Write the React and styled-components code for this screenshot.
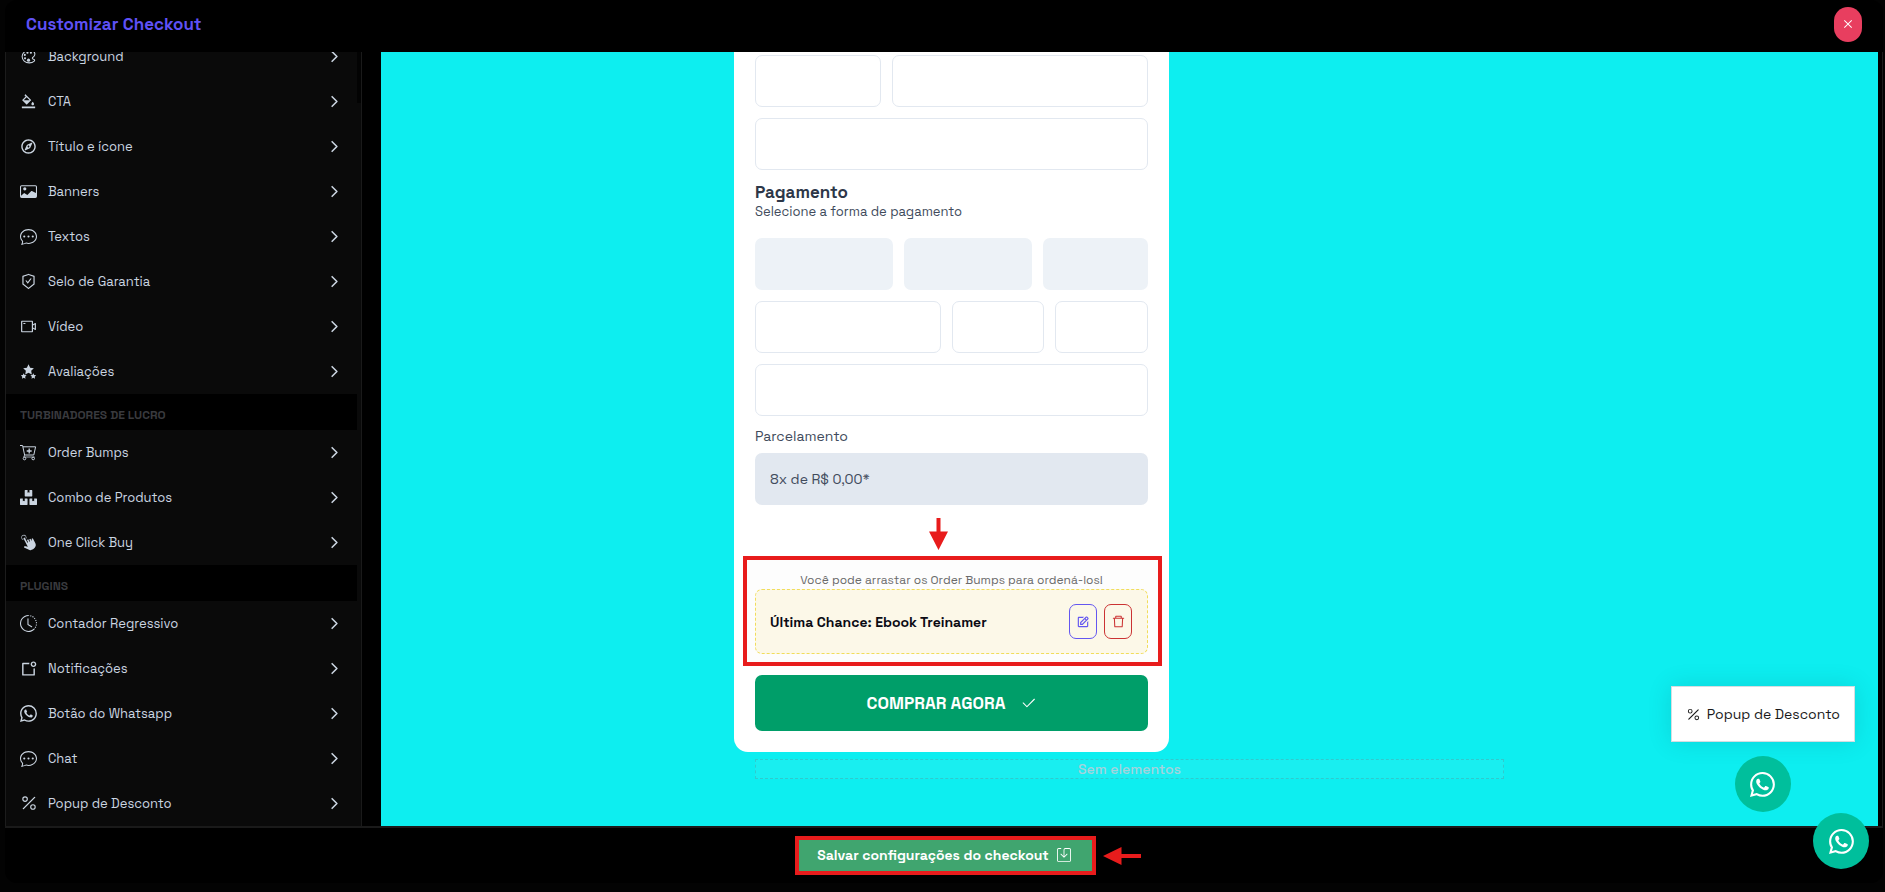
import React from 'react';
import styled, { createGlobalStyle } from 'styled-components';
import { AiOutlineBgColors, AiOutlineClose, AiOutlineDelete, AiOutlineSafetyCertificate, AiOutlineVideoCamera } from 'react-icons/ai';
import { BsCardImage, BsChatDots, BsCheck2, BsClockHistory, BsPercent, BsSave, BsWhatsapp } from 'react-icons/bs';
import { BiEdit } from 'react-icons/bi';
import { FaBoxes, FaRegCompass } from 'react-icons/fa';
import { GiClick, GiStarsStack } from 'react-icons/gi';
import { IoChevronForward, IoColorPaletteOutline } from 'react-icons/io5';
import { RiNotificationBadgeLine } from 'react-icons/ri';

const GlobalStyle = createGlobalStyle`
    *, *::before, *::after {
        box-sizing: border-box;
    }

    body {
        margin: 0;
        background-color: #030303;
        font-family: 'Space Grotesk', Inter, sans-serif;
        font-size: 14px;
    }

    button, input, select {
        font-family: inherit;
        margin: 0;
    }

    button {
        cursor: pointer;
    }
`;

const Modal = styled.div`
    display: flex;
    flex-direction: column;
    height: 100vh;
    padding: 0 2px 9px 5px;
`;

const Header = styled.header`
    display: flex;
    flex: none;
    align-items: center;
    justify-content: space-between;
    height: 52px;
    padding: 0 21px 4px;
    background-color: #000;
    border-radius: 12px 12px 0 0;
`;

const Title = styled.h1`
    margin: 0;
    font-size: 17px;
    font-weight: 600;
    color: #5f51f6;
`;

const CloseButton = styled.button`
    display: flex;
    align-items: center;
    justify-content: center;
    width: 28px;
    height: 35px;
    padding: 0;
    border: 0;
    border-radius: 14px;
    background-color: #e83e5f;
    color: #fff;
`;

const Body = styled.div`
    display: flex;
    flex: 1;
    min-height: 0;
    gap: 19px;
    padding-right: 4px;
    background-color: #000;
    border: 1px solid #1c1c1c;
    border-width: 0 1px;
`;

const Sidebar = styled.nav`
    position: relative;
    display: flex;
    flex: none;
    flex-direction: column;
    justify-content: flex-end;
    width: 356px;
    padding-right: 4px;
    overflow: hidden;
    background-color: #0a0a0a;
    border-right: 1px solid #1a1a1a;
`;

const ScrollThumb = styled.span`
    position: absolute;
    top: 0;
    right: 0;
    width: 4px;
    height: 51px;
    background-color: #030303;
`;

const SectionTitle = styled.h2`
    flex: none;
    height: 36px;
    margin: 0;
    padding: 7px 14px 0;
    background-color: #000;
    color: #393a3e;
    font-size: 12px;
    font-weight: 700;
    line-height: 28px;
    text-transform: uppercase;
`;

const MenuItem = styled.button`
    display: flex;
    flex: none;
    align-items: center;
    gap: 11px;
    width: 100%;
    height: 45px;
    padding: 0 14px 1px;
    border: 0;
    background: none;
    color: #cbd5e1;
    font-size: 13px;
    text-align: left;
`;

const MenuIcon = styled.span`
    display: flex;
    flex: none;
    align-items: center;
    justify-content: center;
    width: 17px;
    font-size: 17px;

    svg {
        flex: none;
    }
`;

const MenuLabel = styled.span`
    flex: 1;
`;

const Canvas = styled.main`
    position: relative;
    display: flex;
    flex: 1;
    flex-direction: column;
    align-items: center;
    justify-content: flex-end;
    min-width: 0;
    padding-bottom: 47px;
    overflow: hidden;
    background-color: #0deef0;
`;

const Preview = styled.div`
    display: flex;
    flex: none;
    flex-direction: column;
    gap: 7px;
    width: 100%;
    max-width: 791px;
`;

const Card = styled.form`
    display: flex;
    flex-direction: column;
    width: 55%;
    padding: 21px;
    background-color: #fff;
    border-radius: 14px;
    color: #414b5c;
`;

const FieldRow = styled.div`
    display: grid;
    grid-template-columns: ${props => props.$columns || '1fr'};
    gap: 11px;
    margin-bottom: 11px;
`;

const Field = styled.input`
    width: 100%;
    height: 52px;
    padding: 0 15px;
    border: 1px solid #e2e8f0;
    border-radius: 7px;
    background-color: #fff;
`;

const Method = styled.button`
    height: 52px;
    border: 0;
    border-radius: 7px;
    background-color: #edf2f7;
`;

const CardTitle = styled.h3`
    margin: 0;
    color: #2d3748;
    font-size: 17px;
    font-weight: 600;
    line-height: 22px;
`;

const CardText = styled.p`
    margin: 0 0 17px;
    font-size: 13px;
    line-height: 18px;
`;

const Label = styled.label`
    margin-bottom: 7px;
    font-size: 14px;
    line-height: 19px;
`;

const Installments = styled.select`
    width: 100%;
    height: 52px;
    padding: 0 15px;
    appearance: none;
    border: 0;
    border-radius: 7px;
    background-color: #e2e8f0;
    color: #414b5c;
    font-size: 14px;
`;

const BumpFrame = styled.section`
    position: relative;
    margin: 51px -14px 9px -12px;
    padding: 12px 10px 8px 8px;
    border: 4px solid #e81c1c;
    background-color: #fdfdfd;
`;

const BumpArrow = styled.svg`
    position: absolute;
    top: -42px;
    left: 182px;
`;

const BumpHint = styled.p`
    margin: 0;
    color: #6b6b6b;
    font-size: 12px;
    line-height: 17px;
    text-align: center;
`;

const Bump = styled.div`
    display: flex;
    align-items: center;
    gap: 7px;
    height: 65px;
    padding: 0 15px 0 14px;
    border: 1px dashed #f1dd5c;
    border-radius: 7px;
    background-color: #fcf8e8;
    color: #0b0b14;
`;

const BumpName = styled.strong`
    flex: 1;
    font-weight: 600;
`;

const BumpButton = styled.button`
    display: flex;
    align-items: center;
    justify-content: center;
    width: 28px;
    height: 35px;
    padding: 0;
    border: 1px solid ${props => props.$color};
    border-radius: 7px;
    background: none;
    color: ${props => props.$color};
    font-size: 14px;
`;

const BuyButton = styled.button`
    display: flex;
    align-items: center;
    justify-content: center;
    gap: 14px;
    width: 100%;
    height: 56px;
    border: 0;
    border-radius: 7px;
    background-color: #009e69;
    color: #fff;
    font-size: 17px;
    font-weight: 600;
`;

const EmptyZone = styled.div`
    height: 20px;
    margin: 0 21px;
    border: 1px dashed rgba(100, 120, 130, 0.3);
    background-color: rgba(255, 255, 255, 0.05);
    color: #a5d3dc;
    font-weight: 500;
    line-height: 19px;
    text-align: center;
`;

const Floating = styled.div`
    position: absolute;
    right: 23px;
    bottom: 14px;
    display: flex;
    flex-direction: column;
    align-items: center;
    gap: 14px;
`;

const PopupButton = styled.button`
    display: flex;
    align-items: center;
    gap: 6px;
    height: 56px;
    padding: 0 14px;
    border: 1px solid #d5dde0;
    background-color: #fff;
    box-shadow: 0 0 24px rgba(0, 60, 80, 0.14);
    color: #1a1a1a;
    font-size: 14px;
`;

const WhatsappButton = styled.a`
    display: flex;
    align-items: center;
    justify-content: center;
    width: 56px;
    height: 56px;
    border-radius: 50%;
    background-color: #00bf9c;
    color: #fff;
    font-size: 25px;
`;

const PageWhatsapp = styled(WhatsappButton)`
    position: fixed;
    right: 16px;
    bottom: 23px;
`;

const Footer = styled.footer`
    display: flex;
    flex: none;
    align-items: center;
    justify-content: center;
    height: 57px;
    padding-left: 3px;
    background-color: #000;
    border-top: 2px solid #1a1a1a;
    border-radius: 0 0 12px 12px;
`;

const SaveFrame = styled.div`
    position: relative;
    border: 4px solid #e81c1c;
`;

const SaveButton = styled.button`
    display: flex;
    align-items: center;
    gap: 8px;
    height: 31px;
    padding: 0 21px 1px 18px;
    border: 0;
    background-color: #40a56f;
    color: #fff;
    font-size: 14px;
    font-weight: 600;
`;

const SaveArrow = styled.svg`
    position: absolute;
    top: 7px;
    left: calc(100% + 11px);
`;

const CartIcon = () => (
    <svg width="17" height="17" viewBox="0 0 17 17" fill="none" stroke="currentColor">
        <path d="M0 1.500h2.600l2 9.500h9.200l1.800-8.200H3" />
        <path d="M9.200 4.500v5M6.700 7h5" strokeWidth="1.300" />
        <path d="M4.600 11l-.8 2h10.800" strokeWidth="0.800" />
        <circle cx="4.500" cy="14.500" r="1.300" />
        <circle cx="13.200" cy="14.500" r="1.300" />
    </svg>
);

const customItems = [
    { label: 'Background', icon: <IoColorPaletteOutline /> },
    { label: 'CTA', icon: <AiOutlineBgColors /> },
    { label: 'Título e ícone', icon: <FaRegCompass size={15} /> },
    { label: 'Banners', icon: <BsCardImage /> },
    { label: 'Textos', icon: <BsChatDots /> },
    { label: 'Selo de Garantia', icon: <AiOutlineSafetyCertificate /> },
    { label: 'Vídeo', icon: <AiOutlineVideoCamera /> },
    { label: 'Avaliações', icon: <GiStarsStack /> },
];

const profitItems = [
    { label: 'Order Bumps', icon: <CartIcon /> },
    { label: 'Combo de Produtos', icon: <FaBoxes /> },
    { label: 'One Click Buy', icon: <GiClick /> },
];

const pluginItems = [
    { label: 'Contador Regressivo', icon: <BsClockHistory /> },
    { label: 'Notificações', icon: <RiNotificationBadgeLine /> },
    { label: 'Botão do Whatsapp', icon: <BsWhatsapp /> },
    { label: 'Chat', icon: <BsChatDots /> },
    { label: 'Popup de Desconto', icon: <BsPercent size={18} /> },
];

const Menu = ({ items }) => items.map(item => (
    <MenuItem key={item.label} type="button">
        <MenuIcon>{item.icon}</MenuIcon>
        <MenuLabel>{item.label}</MenuLabel>
        <IoChevronForward size={17} />
    </MenuItem>
));

const CheckoutCard = () => (
    <Card onSubmit={e => e.preventDefault()}>
        <FieldRow $columns="126fr 256fr">
            <Field aria-label="CEP" />
            <Field aria-label="Endereço" />
        </FieldRow>
        <FieldRow>
            <Field aria-label="Complemento" />
        </FieldRow>
        <CardTitle>Pagamento</CardTitle>
        <CardText>Selecione a forma de pagamento</CardText>
        <FieldRow $columns="138fr 129fr 105fr">
            <Method type="button" aria-label="Cartão" />
            <Method type="button" aria-label="Boleto" />
            <Method type="button" aria-label="Pix" />
        </FieldRow>
        <FieldRow $columns="2fr 1fr 1fr">
            <Field aria-label="Número do cartão" />
            <Field aria-label="Validade" />
            <Field aria-label="CVV" />
        </FieldRow>
        <FieldRow>
            <Field aria-label="Nome do titular" />
        </FieldRow>
        <Label htmlFor="parcelamento">Parcelamento</Label>
        <Installments id="parcelamento">
            <option>8x de R$ 0,00*</option>
        </Installments>
        <BumpFrame>
            <BumpArrow width="19" height="32" viewBox="0 0 19 32" fill="#e81c1c">
                <path d="M7.500 0h4v13.500h7.500L9.500 32 0 13.500h7.500z" />
            </BumpArrow>
            <BumpHint>Você pode arrastar os Order Bumps para ordená-los!</BumpHint>
            <Bump>
                <BumpName>Última Chance: Ebook Treinamer</BumpName>
                <BumpButton type="button" $color="#6457f0" aria-label="Editar"><BiEdit /></BumpButton>
                <BumpButton type="button" $color="#cb3333" aria-label="Excluir"><AiOutlineDelete size={15} /></BumpButton>
            </Bump>
        </BumpFrame>
        <BuyButton type="submit">
            COMPRAR AGORA
            <BsCheck2 size={17} />
        </BuyButton>
    </Card>
);

const App = () => (
    <>
        <GlobalStyle />
        <Modal>
            <Header>
                <Title>Customizar Checkout</Title>
                <CloseButton type="button" aria-label="Fechar"><AiOutlineClose size={12} /></CloseButton>
            </Header>
            <Body>
                <Sidebar>
                    <Menu items={customItems} />
                    <SectionTitle>Turbinadores de lucro</SectionTitle>
                    <Menu items={profitItems} />
                    <SectionTitle>Plugins</SectionTitle>
                    <Menu items={pluginItems} />
                    <ScrollThumb />
                </Sidebar>
                <Canvas>
                    <Preview>
                        <CheckoutCard />
                        <EmptyZone>Sem elementos</EmptyZone>
                    </Preview>
                    <Floating>
                        <PopupButton type="button">
                            <BsPercent size={15} />
                            Popup de Desconto
                        </PopupButton>
                        <WhatsappButton href="#whatsapp" aria-label="Whatsapp"><BsWhatsapp /></WhatsappButton>
                    </Floating>
                </Canvas>
            </Body>
            <Footer>
                <SaveFrame>
                    <SaveButton type="button">
                        Salvar configurações do checkout
                        <BsSave />
                    </SaveButton>
                    <SaveArrow width="38" height="18" viewBox="0 0 38 18" fill="#e81c1c">
                        <path d="M0 9L18.500 0v7H38v4H18.500v7z" />
                    </SaveArrow>
                </SaveFrame>
            </Footer>
            <PageWhatsapp href="#suporte" aria-label="Suporte"><BsWhatsapp /></PageWhatsapp>
        </Modal>
    </>
);

export default App;
